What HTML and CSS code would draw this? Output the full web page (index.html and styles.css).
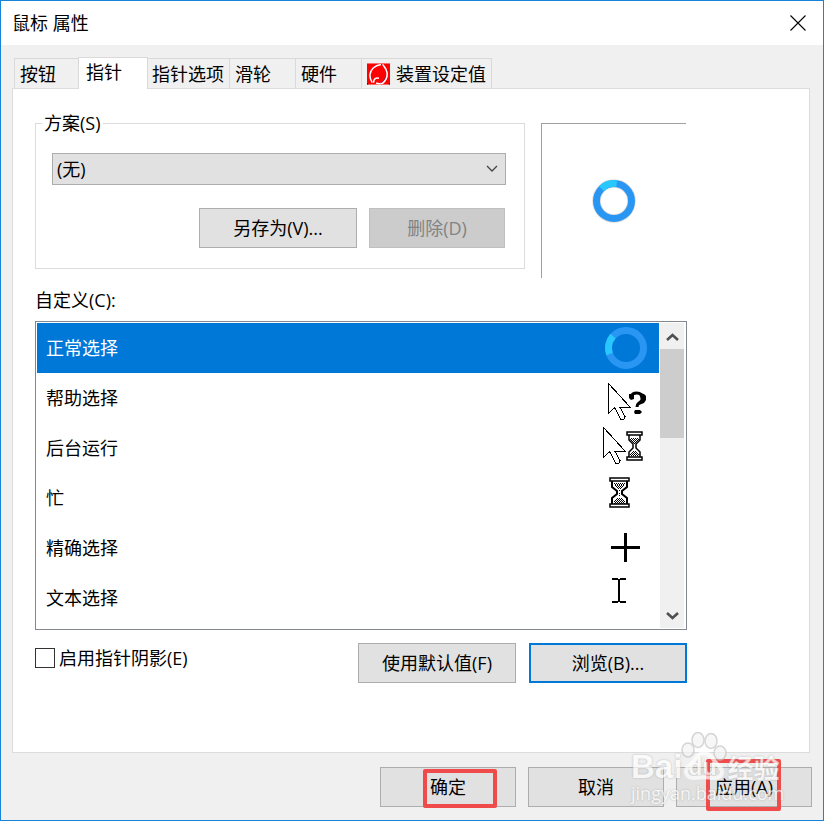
FILE: index.html
```html
<!DOCTYPE html>
<html lang="zh-CN">
<head>
<meta charset="utf-8">
<title>鼠标 属性</title>
<link rel="stylesheet" href="styles.css">
</head>
<body>
<div class="window">
  <header class="titlebar">
    <h1 class="title">鼠标 属性</h1>
    <button class="close" type="button" aria-label="关闭">
      <svg width="16" height="16" viewBox="0 0 16 16"><path d="M.5 .5l15 15M15.500 .5l-15 15" stroke="#000" stroke-width="1.100" fill="none"/></svg>
    </button>
  </header>

  <main class="content">
    <nav class="tabs" role="tablist">
      <button class="tab tab-first" type="button" role="tab">按钮</button>
      <button class="tab tab-active" type="button" role="tab" aria-selected="true">指针</button>
      <button class="tab tab-wide" type="button" role="tab">指针选项</button>
      <button class="tab" type="button" role="tab">滑轮</button>
      <button class="tab" type="button" role="tab">硬件</button>
      <button class="tab tab-device" type="button" role="tab">
        <svg width="24" height="22" viewBox="0 0 24 22"><path fill="#f00" d="M0 0h24v22H0z"/><path d="M0 20.500L1.500 22H0zM22.500 22l1.500-1.500V22z" fill="#200"/><path d="M14.500 1C8 2 3.500 6.500 3 12c0 3 .8 5.500 2.500 8" fill="none" stroke="#fff" stroke-width="1.600"/><path d="M16.500 1c.5 2 4 4 4.500 9 .3 4-1.500 8-4.500 10.500-2 .8-5 .8-7 0" fill="none" stroke="#fff" stroke-width="1.700"/><path d="M7 20c-.5-3.500 2-5.500 5.500-4.500" fill="none" stroke="#fff" stroke-width="1.600"/><path d="M14 20.500c3-1.500 5-4.500 5.500-8" fill="none" stroke="#636" stroke-width=".8"/></svg>
        <span>装置设定值</span>
      </button>
    </nav>

    <section class="panel" role="tabpanel">
      <div class="top-row">
        <fieldset class="scheme">
          <legend><label for="scheme">方案(S)</label></legend>
          <div class="select-wrap">
            <select id="scheme"><option>(无)</option></select>
            <svg class="chevron" width="12" height="7" viewBox="0 0 12 7"><path d="M1 1l5 5 5-5" fill="none" stroke="#444" stroke-width="1.300"/></svg>
          </div>
          <div class="scheme-actions">
            <button class="btn btn-wide" type="button">另存为(V)...</button>
            <button class="btn" type="button" disabled>删除(D)</button>
          </div>
        </fieldset>
        <div class="preview">
          <svg width="44" height="44" viewBox="0 0 44 44"><circle cx="22" cy="22" r="17.500" fill="none" stroke="#ddd" stroke-width="8.500"/><circle cx="22" cy="22" r="17.500" fill="none" stroke="#2a96f4" stroke-width="7"/><path d="M9.500 9.700A17.500 17.500 0 0 1 24.700 4.700" fill="none" stroke="#28c8ff" stroke-width="7"/></svg>
        </div>
      </div>

      <h2 class="list-label" id="custom-label">自定义(C):</h2>
      <div class="listbox">
        <ul class="rows" role="listbox" aria-labelledby="custom-label">
          <li class="row row-selected" role="option" aria-selected="true">正常选择
            <svg width="48" height="50" viewBox="0 0 48 50"><circle cx="25" cy="25" r="17.500" fill="none" stroke="#2a96f4" stroke-width="7"/><path d="M8.600 31A17.500 17.500 0 0 1 12 13.200" fill="none" stroke="#28c8ff" stroke-width="7"/></svg>
          </li>
          <li class="row" role="option">帮助选择
            <svg width="48" height="50" viewBox="0 0 48 50"><path class="arrow" d="M7.500 10.500v30l6-6 6.500 12h2q2 0 2-3l-5-9h10.500z"/><path d="M30.500 25v-2q1-3 5-3 6 0 6 5 0 3-3.500 5-2 1.500-2 4" fill="none" stroke="#000" stroke-width="3"/><path d="M28 21h5v5l-3 1-2-2zM38 20l5 1 2 2v4l-2 3-5 2 2-5zM34 37h5l2 2-2 2h-5l-1-2z"/></svg>
          </li>
          <li class="row" role="option">后台运行
            <svg width="48" height="50" viewBox="0 0 48 50"><path class="arrow" d="M2.500 4.500v30l6-6 6.500 12h2q2 0 2-3l-5-9h10.500z"/><g transform="translate(25 8)"><path d="M1 1h15v3H1zM1 26h15v3H1z" fill="#fff" stroke="#000" stroke-width="1.500"/><path d="M3 4v5l4 4v4l-4 4v5M14 4v5l-4 4v4l4 4v5" fill="none" stroke="#000" stroke-width="1.500"/><path d="M5 7.500h8M5 9.500h8M7 11.500h4M7 20.500h4M5 22.500h8M5 24.500h8" stroke="#000" stroke-width="1" stroke-dasharray="1 1"/><path d="M4 8.500h9M6 10.500h6M8 12.500h2M6 21.500h6M4 23.500h9" stroke="#000" stroke-width="1" stroke-dasharray="1 1"/></g></svg>
          </li>
          <li class="row" role="option">忙
            <svg width="48" height="50" viewBox="0 0 48 50"><g transform="translate(8 4)"><path d="M1 1h19v3H1zM1 27h19v3H1z" fill="#fff" stroke="#000" stroke-width="1.500"/><path d="M3 4v6l5 4v3l-5 4v6M18 4v6l-5 4v3l5 4v6" fill="none" stroke="#000" stroke-width="2"/><path d="M5 6.500h11M6 8.500h9M8 10.500h5M7 22.500h8M5 24.500h11M5 26.500h11M10 13.500h1M10 18.500h1" stroke="#000" stroke-width="1" stroke-dasharray="1 1"/><path d="M6 7.500h10M7 9.500h7M9 11.500h4M8 21.500h5M6 23.500h10M6 25.500h10M10 16.500h1" stroke="#000" stroke-width="1" stroke-dasharray="1 1"/></g></svg>
          </li>
          <li class="row" role="option">精确选择
            <svg width="48" height="50" viewBox="0 0 48 50"><path d="M10 23h29v3H10zM23 10h3v29h-3z"/></svg>
          </li>
          <li class="row" role="option">文本选择
            <svg width="48" height="50" viewBox="0 0 48 50"><path d="M11 5h6v2h-6zM19 5h6v2h-6zM11 28h6v2h-6zM19 28h6v2h-6zM17 6h2v23h-2z"/></svg>
          </li>
        </ul>
        <div class="scrollbar" aria-hidden="true">
          <svg width="24" height="26" viewBox="0 0 24 26"><path d="M7 17l5.500-5 5.500 5" fill="none" stroke="#505050" stroke-width="2.600"/></svg>
          <div class="thumb"></div>
          <svg class="down" width="24" height="26" viewBox="0 0 24 26"><path d="M7 11l5.500 5 5.500-5" fill="none" stroke="#505050" stroke-width="2.600"/></svg>
        </div>
      </div>

      <div class="bottom-row">
        <label class="check"><input type="checkbox">启用指针阴影(E)</label>
        <button class="btn btn-wide" type="button">使用默认值(F)</button>
        <button class="btn btn-wide btn-default" type="button">浏览(B)...</button>
      </div>
    </section>
  </main>

  <footer class="footer">
    <button class="btn" type="button">确定<span class="mark mark-ok"></span></button>
    <button class="btn" type="button">取消</button>
    <button class="btn" type="button">应用(A)<span class="mark mark-apply"></span></button>
    <div class="watermark">
      <svg class="paw" width="50" height="52" viewBox="0 0 50 52"><g fill="#f4f4f4" stroke="#c4c4c4" stroke-width="1.500"><ellipse cx="9" cy="18" rx="6" ry="7"/><ellipse cx="19" cy="8" rx="6" ry="7.500"/><ellipse cx="32" cy="9" rx="6" ry="7.500"/><ellipse cx="41" cy="21" rx="6" ry="7"/></g><path d="M25 21c7 0 9 7 14 12 7 6 4 13-4 13-7-1-13-1-20 0-8 0-11-8-4-13 6-5 7-12 14-12z" fill="none" stroke="#fff" stroke-width="4"/></svg>
      <div class="brand"><span>Bai</span><span class="du">du</span><span class="cn">经验</span></div>
      <div class="url">jingyan.baidu.com</div>
    </div>
  </footer>
</div>
</body>
</html>
```
FILE: styles.css
```css
* { box-sizing: border-box; }

body {
  margin: 0;
  background: #f0f0f0;
  color: #000;
  font: 18px/24px "Open Sans", "Noto Sans CJK SC", sans-serif;
}

button, select, input { font: inherit; color: inherit; margin: 0; }

.window {
  display: flex;
  flex-direction: column;
  min-height: 100vh;
  border: 1px solid #1883d7;
  background: #f0f0f0;
}

.titlebar {
  display: flex;
  align-items: center;
  justify-content: space-between;
  height: 44px;
  padding: 0 17px 0 11px;
  background: #fff;
}
.title { margin: 0; font-size: 18px; font-weight: 400; }
.close { display: flex; padding: 0; border: 0; background: none; }

.content {
  display: flex;
  flex: 1;
  flex-direction: column;
  padding: 12px 13px 0 11px;
}

.tabs { display: flex; align-items: flex-end; padding-left: 2px; }
.tab {
  display: flex;
  align-items: center;
  gap: 6px;
  width: 67px;
  height: 30px;
  margin-right: -1px;
  padding: 0 5px;
  border: 1px solid #d9d9d9;
  border-bottom: 0;
  background: #f0f0f0;
  white-space: nowrap;
}
.tab-first { width: 65px; }
.tab-wide { width: 83px; padding: 0 4px; }
.tab-device { width: 131px; }
.tab-active {
  z-index: 1;
  width: 70px;
  height: 32px;
  margin-bottom: -1px;
  padding: 0 7px 3px;
  background: #fff;
}

.panel {
  flex: 1;
  padding: 34px 22px 20px;
  border: 1px solid #dcdcdc;
  background: #fff;
}

.top-row {
  display: flex;
  gap: 16px;
  max-width: 651px;
  height: 155px;
}
.scheme {
  width: 490px;
  height: 158px;
  margin: -12px 0 0;
  padding: 18px 18px 0 16px;
  border: 1px solid #dcdcdc;
}
.scheme legend { margin-left: -10px; padding: 0 2px; }
.select-wrap { position: relative; }
.select-wrap select {
  display: block;
  width: 100%;
  height: 32px;
  padding: 0 4px;
  border: 1px solid #adadad;
  border-radius: 0;
  background: #e1e1e1;
  appearance: none;
}
.chevron { position: absolute; top: 12px; right: 8px; }
.scheme-actions {
  display: flex;
  justify-content: flex-end;
  gap: 12px;
  margin-top: 23px;
  padding-right: 1px;
}

.btn {
  position: relative;
  width: 136px;
  height: 40px;
  padding: 0;
  border: 1px solid #adadad;
  background: #e1e1e1;
}
.btn-wide { width: 158px; }
.btn-default { border: 2px solid #0078d7; }
.btn:disabled { border-color: #bfbfbf; background: #ccc; color: #838383; }

.preview {
  display: flex;
  flex: 1;
  align-items: center;
  justify-content: center;
  border-top: 1px solid #a0a0a0;
  border-left: 1px solid #a0a0a0;
}

.list-label { margin: 10px 0 9px; font-size: 18px; font-weight: 400; }

.listbox {
  display: flex;
  max-width: 652px;
  height: 309px;
  padding: 1px;
  border: 1px solid #828790;
}
.rows {
  flex: 1;
  margin: 0;
  padding: 0;
  overflow: hidden;
  list-style: none;
}
.row {
  display: flex;
  align-items: center;
  justify-content: space-between;
  height: 50px;
  padding: 0 10px 0 9px;
}
.row-selected { background: #0078d7; color: #fff; }
.arrow { fill: #fff; stroke: #000; stroke-width: 1; shape-rendering: crispEdges; }

.scrollbar {
  display: flex;
  flex-direction: column;
  width: 24px;
  margin: 0 1px;
  background: #f0f0f0;
}
.thumb { height: 89px; background: #cdcdcd; }
.down { margin-top: auto; }

.bottom-row {
  display: flex;
  gap: 13px;
  max-width: 652px;
  margin-top: 13px;
}
.check {
  display: flex;
  align-items: center;
  gap: 4px;
  height: 30px;
  margin-right: auto;
}
.check input {
  width: 20px;
  height: 20px;
  border: 1px solid #333;
  background: #fff;
  appearance: none;
}

.footer {
  position: relative;
  display: flex;
  justify-content: flex-end;
  gap: 12px;
  padding: 14px 11px 13px;
}

.mark { position: absolute; border: 4px solid #ef4b4b; border-radius: 2px; }
.mark-ok { inset: 1px 18px -2px 42px; }
.mark-apply { inset: -9px 30px -5px 29px; }

.watermark {
  position: absolute;
  right: 42px;
  bottom: 12px;
  width: 150px;
  height: 76px;
  color: #fff;
  opacity: 0.7;
  pointer-events: none;
  text-shadow: 0 0 2px #999;
  white-space: nowrap;
}
.brand {
  display: flex;
  align-items: center;
  height: 30px;
  margin-top: 20px;
  font: 700 33px/30px "Liberation Sans", sans-serif;
}
.brand .du { margin-left: 6px; font-size: 23px; }
.brand .cn { margin-left: 11px; font: 700 26px/30px "Noto Sans CJK SC", sans-serif; }
.paw { position: absolute; top: 0; left: 48px; }
.url { font-size: 18px; line-height: 22px; }
```
